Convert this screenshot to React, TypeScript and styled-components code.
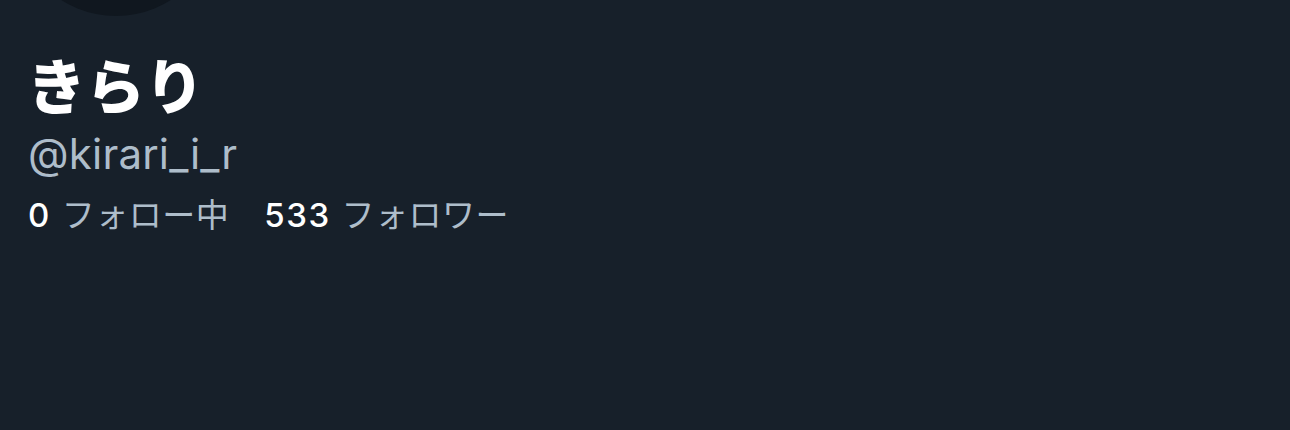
import styled, { createGlobalStyle } from "styled-components";

const Global = createGlobalStyle`
html, body {
    margin: 0;
    padding: 0;
    background-color: #17202a;
}
body {
    font-family: "Inter", "Noto Sans CJK JP", sans-serif;
    overflow: hidden;
}
`

const Page = styled.div`
width: 1290px;
height: 430px;
background-color: #17202a;
padding-left: 28px;
box-sizing: border-box;
display: flex;
flex-direction: column;
`
const Avatar = styled.div`
width: 204px;
height: 204px;
border-radius: 50%;
background-color: #10171f;
margin-top: -188px;
margin-left: -14px;
`
const Name = styled.div`
font-family: "Noto Sans CJK JP", sans-serif;
font-weight: 900;
font-size: 59px;
line-height: 1;
color: #ffffff;
margin-top: 38px;
margin-left: -1px;
`
const Handle = styled.div`
font-size: 42px;
line-height: 1;
color: #aebdca;
margin-top: 20px;
letter-spacing: 0.2px;
`
const Stats = styled.div`
display: flex;
flex-direction: row;
gap: 35px;
margin-top: 22px;
`
const Stat = styled.div`
display: flex;
align-items: baseline;
gap: 11px;
font-size: 33px;
line-height: 1;
`
const Count = styled.span`
color: #ffffff;
font-weight: 500;
letter-spacing: 1.5px;
`
const Label = styled.span`
font-family: "Noto Sans CJK JP", sans-serif;
color: #aebdca;
letter-spacing: 0.5px;
`

const App = () => {
    return (
        <Page>
            <Global />
            <Avatar />
            <Name>きらり</Name>
            <Handle>@kirari_i_r</Handle>
            <Stats>
                <Stat>
                    <Count>0</Count>
                    <Label>フォロー中</Label>
                </Stat>
                <Stat>
                    <Count>533</Count>
                    <Label>フォロワー</Label>
                </Stat>
            </Stats>
        </Page>
    )
}

export default App;
